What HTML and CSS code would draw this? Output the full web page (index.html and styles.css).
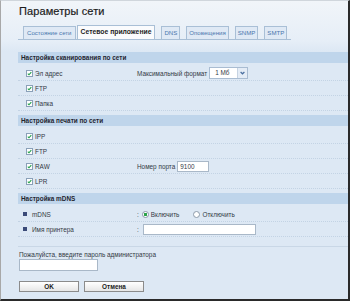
FILE: index.html
```html
<!DOCTYPE html>
<html lang="ru">
<head>
    <meta charset="UTF-8">
    <title>Параметры сети</title>
    <link rel="stylesheet" href="styles.css">
</head>
<body>
    <div class="frame">
        <h1 class="title">Параметры сети</h1>

        <div class="tabs">
            <span class="tab tab-first">Состояние сети</span>
            <span class="tab active">Сетевое приложение</span>
            <span class="tab">DNS</span>
            <span class="tab">Оповещения</span>
            <span class="tab">SNMP</span>
            <span class="tab">SMTP</span>
        </div>

        <div class="section">
            <div class="section-head">Настройка сканирования по сети</div>
            <div class="row">
                <label class="check"><i class="box"></i>Эл адрес</label>
                <div class="field">
                    <span class="field-label">Максимальный формат</span>
                    <span class="select">1 Мб<i class="select-btn"></i></span>
                </div>
            </div>
            <div class="row">
                <label class="check"><i class="box"></i>FTP</label>
            </div>
            <div class="row">
                <label class="check"><i class="box"></i>Папка</label>
            </div>
        </div>

        <div class="section">
            <div class="section-head">Настройка печати по сети</div>
            <div class="row">
                <label class="check"><i class="box"></i>IPP</label>
            </div>
            <div class="row">
                <label class="check"><i class="box"></i>FTP</label>
            </div>
            <div class="row">
                <label class="check"><i class="box"></i>RAW</label>
                <div class="field">
                    <span class="field-label">Номер порта</span>
                    <span class="input port">9100</span>
                </div>
            </div>
            <div class="row">
                <label class="check"><i class="box"></i>LPR</label>
            </div>
        </div>

        <div class="section">
            <div class="section-head">Настройка mDNS</div>
            <div class="row">
                <span class="item"><i class="bullet"></i>mDNS</span>
                <div class="field">
                    <span class="colon">:</span>
                    <span class="radio"><i class="dot on"></i>Включить</span>
                    <span class="radio"><i class="dot"></i>Отключить</span>
                </div>
            </div>
            <div class="row">
                <span class="item"><i class="bullet"></i>Имя принтера</span>
                <div class="field">
                    <span class="colon">:</span>
                    <span class="input name"></span>
                </div>
            </div>
        </div>

        <div class="login">
            <div class="login-label">Пожалуйста, введите пароль администратора</div>
            <span class="input password"></span>
            <div class="buttons">
                <span class="btn">OK</span>
                <span class="btn">Отмена</span>
            </div>
        </div>
    </div>
</body>
</html>
```

FILE: styles.css
```css
:root {
    --page-bg: #dde8f4;
    --head-bg: #bfd5eb;
    --tab-border: #a9bfd6;
    --tab-text: #4a76ad;
    --text: #333a44;
    --dots: #c3d3e4;
}

body {
    margin: 0;
    font-family: "Liberation Sans", Arial, sans-serif;
    color: var(--text);
}

.frame {
    box-sizing: border-box;
    width: 350px;
    height: 301px;
    overflow: hidden;
    border-left: 1px solid #a8a8a8;
    border-top: 1px solid #d0d6dc;
    border-right: 2px solid #2a2a2a;
    border-bottom: 2px solid #2a2a2a;
    background: linear-gradient(#f1f5f9 0, #e6eef7 40px, var(--page-bg) 50px);
    padding-left: 17px;
}

.title {
    margin: 0;
    padding: 4px 0 0 1px;
    height: 22px;
    box-sizing: border-box;
    font-size: 11px;
    font-weight: normal;
    color: #1c1c1c;
    letter-spacing: 0.1px;
    -webkit-text-stroke: 0.2px #1c1c1c;
}

.tabs {
    display: flex;
    align-items: flex-end;
    height: 17px;
    width: 273px;
    padding-left: 5px;
    box-sizing: border-box;
    border-bottom: 1px solid var(--tab-border);
}

.tab {
    white-space: nowrap;
    height: 12px;
    line-height: 12px;
    padding: 0 2px;
    margin-right: 6px;
    font-size: 6.1px;
    color: var(--tab-text);
    background: #dfe9f5;
    border: 1px solid var(--tab-border);
    border-bottom: none;
}

.tab-first {
    padding: 0 3px;
    margin-right: 1px;
}

.tab.active {
    background: #fafbfd;
    color: #1e1e1e;
    font-weight: bold;
    font-size: 6.8px;
    height: 13px;
    padding: 0 3px;
}

.section {
    margin-top: 12px;
}

.section + .section {
    margin-top: 4px;
}

.section-head {
    height: 11px;
    line-height: 11px;
    padding-left: 3px;
    margin-bottom: 3px;
    background: var(--head-bg);
    font-size: 6.4px;
    font-weight: bold;
    color: #1f2630;
}

.row {
    display: flex;
    align-items: center;
    height: 14px;
    padding-left: 4px;
    font-size: 6.4px;
    border-bottom: 1px dotted var(--dots);
}

.check, .item {
    display: flex;
    align-items: center;
    width: 115px;
}

.check {
    padding-left: 4px;
    width: 111px;
}

.box {
    width: 5px;
    height: 5px;
    margin-right: 2px;
    border: 1px solid #8aa0b8;
    background: #fff url("data:image/svg+xml,%3Csvg xmlns='http://www.w3.org/2000/svg' viewBox='0 0 5 5'%3E%3Cpath d='M0.8 2.6 L2 3.8 L4.3 1.1' fill='none' stroke='%2321a04a' stroke-width='1.1'/%3E%3C/svg%3E") no-repeat center / 5px 5px;
}

.bullet {
    width: 4px;
    height: 4px;
    margin: 0 5px 0 1px;
    background: #3b4a78;
}

.field {
    display: flex;
    align-items: center;
    gap: 2px;
}

.field-label {
    margin-right: 0;
}

.select {
    position: relative;
    width: 32px;
    height: 10px;
    line-height: 10px;
    padding-left: 5px;
    background: #fff;
    border: 1px solid #a9bcd2;
}

.select-btn {
    position: absolute;
    right: 0;
    top: 0;
    width: 9px;
    height: 10px;
    background: #e4ecf6 url("data:image/svg+xml,%3Csvg xmlns='http://www.w3.org/2000/svg' viewBox='0 0 9 10'%3E%3Cpath d='M2.6 4 L4.5 5.8 L6.4 4' fill='none' stroke='%234a6fa0' stroke-width='1.2'/%3E%3C/svg%3E") no-repeat center;
    border-left: 1px solid #c6d3e2;
}

.input {
    display: inline-block;
    height: 9px;
    line-height: 9px;
    background: #fff;
    border: 1px solid #a9b8c8;
    padding-left: 2px;
    box-sizing: content-box;
}

.port {
    width: 28px;
}

.name {
    width: 109px;
    margin-left: 1px;
}

.colon {
    margin-right: 1px;
}

.radio {
    display: flex;
    align-items: center;
    margin-right: 12px;
}

.dot {
    width: 5px;
    height: 5px;
    margin-right: 2px;
    border: 1px solid #8c9aaa;
    border-radius: 50%;
    background: #fff;
}

.dot.on {
    background: radial-gradient(circle, #2aa34a 0 1.4px, #fff 1.8px);
}

.login {
    margin-top: 9px;
    border-top: 1px solid #c9d7e6;
    padding-top: 4px;
    font-size: 6.4px;
}

.login-label {
    height: 8px;
    line-height: 8px;
    padding-left: 1px;
}

.password {
    width: 75px;
    height: 10px;
    margin-left: 1px;
}

.buttons {
    display: flex;
    gap: 5px;
    margin-top: 9px;
    padding-left: 1px;
}

.btn {
    width: 58px;
    height: 9px;
    line-height: 9px;
    text-align: center;
    font-weight: bold;
    color: #1a1a1a;
    background: linear-gradient(#ffffff, #e6e6e6);
    border: 1px solid #8b8b8b;
}
```
